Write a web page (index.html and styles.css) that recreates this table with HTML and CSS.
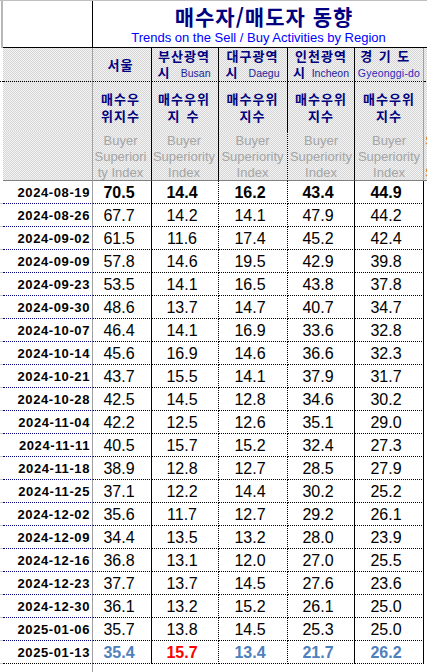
FILE: index.html
```html
<!DOCTYPE html>
<html lang="ko">
<head>
<meta charset="utf-8">
<title>매수자/매도자 동향</title>
<link rel="stylesheet" href="styles.css">
</head>
<body>
<div class="sheet">
  <!-- title row -->
  <div class="gut gut-title"></div>
  <div class="t-left"></div>
  <div class="t-title">
    <div class="ttl">매수자/매도자 동향</div>
    <div class="sub">Trends on the Sell / Buy Activities by Region</div>
  </div>
  <div class="t-x"></div>

  <!-- header row 1: regions -->
  <div class="gut gut-h1"></div>
  <div class="h h1 ca"></div>
  <div class="h h1 cs"><div class="kr">서울</div></div>
  <div class="h h1 cb"><div class="nm w53"><div class="kr">부산광역</div><div class="l2"><span class="kr">시</span><span class="en">Busan</span></div></div></div>
  <div class="h h1 cd"><div class="nm w54"><div class="kr">대구광역</div><div class="l2"><span class="kr">시</span><span class="en">Daegu</span></div></div></div>
  <div class="h h1 ci"><div class="nm w56"><div class="kr">인천광역</div><div class="l2"><span class="kr">시</span><span class="en">Incheon</span></div></div></div>
  <div class="h h1 cg"><div class="nm"><div class="kr wide">경기도</div><div class="en gy">Gyeonggi-do</div></div></div>
  <div class="h h1 cx"></div>

  <!-- header row 2: Korean index name -->
  <div class="gut"></div>
  <div class="h h2 ca"></div>
  <div class="h h2 cs"><div class="kr">매수우<br>위지수</div></div>
  <div class="h h2 cb"><div class="kr">매수우위<br><span class="sp7">지수</span></div></div>
  <div class="h h2 cd"><div class="kr">매수우위<br>지수</div></div>
  <div class="h h2 ci"><div class="kr">매수우위<br>지수</div></div>
  <div class="h h2 cg"><div class="kr">매수우위<br>지수</div></div>
  <div class="h h2 cx"></div>

  <!-- header row 3: English index name -->
  <div class="gut"></div>
  <div class="h h3 ca"></div>
  <div class="h h3 cs"><div class="eg">Buyer<br>Superiori<br>ty Index</div></div>
  <div class="h h3 cb"><div class="eg">Buyer<br>Superiority<br>Index</div></div>
  <div class="h h3 cd dotr"><div class="eg">Buyer<br>Superiority<br>Index</div></div>
  <div class="h h3 ci"><div class="eg">Buyer<br>Superiority<br>Index</div></div>
  <div class="h h3 cg"><div class="eg">Buyer<br>Superiority<br>Index</div></div>
  <div class="h h3 cx"><div class="or">Seller<br><br>Supply</div></div>

  <!-- data -->
  <div class="r first"><div></div><div>2024-08-19</div><div>70.5</div><div>14.4</div><div>16.2</div><div>43.4</div><div>44.9</div><div></div></div>
  <div class="r"><div></div><div>2024-08-26</div><div>67.7</div><div>14.2</div><div>14.1</div><div>47.9</div><div>44.2</div><div></div></div>
  <div class="r"><div></div><div>2024-09-02</div><div>61.5</div><div>11.6</div><div>17.4</div><div>45.2</div><div>42.4</div><div></div></div>
  <div class="r"><div></div><div>2024-09-09</div><div>57.8</div><div>14.6</div><div>19.5</div><div>42.9</div><div>39.8</div><div></div></div>
  <div class="r"><div></div><div>2024-09-23</div><div>53.5</div><div>14.1</div><div>16.5</div><div>43.8</div><div>37.8</div><div></div></div>
  <div class="r"><div></div><div>2024-09-30</div><div>48.6</div><div>13.7</div><div>14.7</div><div>40.7</div><div>34.7</div><div></div></div>
  <div class="r"><div></div><div>2024-10-07</div><div>46.4</div><div>14.1</div><div>16.9</div><div>33.6</div><div>32.8</div><div></div></div>
  <div class="r"><div></div><div>2024-10-14</div><div>45.6</div><div>16.9</div><div>14.6</div><div>36.6</div><div>32.3</div><div></div></div>
  <div class="r"><div></div><div>2024-10-21</div><div>43.7</div><div>15.5</div><div>14.1</div><div>37.9</div><div>31.7</div><div></div></div>
  <div class="r"><div></div><div>2024-10-28</div><div>42.5</div><div>14.5</div><div>12.8</div><div>34.6</div><div>30.2</div><div></div></div>
  <div class="r"><div></div><div>2024-11-04</div><div>42.2</div><div>12.5</div><div>12.6</div><div>35.1</div><div>29.0</div><div></div></div>
  <div class="r"><div></div><div>2024-11-11</div><div>40.5</div><div>15.7</div><div>15.2</div><div>32.4</div><div>27.3</div><div></div></div>
  <div class="r"><div></div><div>2024-11-18</div><div>38.9</div><div>12.8</div><div>12.7</div><div>28.5</div><div>27.9</div><div></div></div>
  <div class="r"><div></div><div>2024-11-25</div><div>37.1</div><div>12.2</div><div>14.4</div><div>30.2</div><div>25.2</div><div></div></div>
  <div class="r"><div></div><div>2024-12-02</div><div>35.6</div><div>11.7</div><div>12.7</div><div>29.2</div><div>26.1</div><div></div></div>
  <div class="r"><div></div><div>2024-12-09</div><div>34.4</div><div>13.5</div><div>13.2</div><div>28.0</div><div>23.9</div><div></div></div>
  <div class="r"><div></div><div>2024-12-16</div><div>36.8</div><div>13.1</div><div>12.0</div><div>27.0</div><div>25.5</div><div></div></div>
  <div class="r"><div></div><div>2024-12-23</div><div>37.7</div><div>13.7</div><div>14.5</div><div>27.6</div><div>23.6</div><div></div></div>
  <div class="r"><div></div><div>2024-12-30</div><div>36.1</div><div>13.2</div><div>15.2</div><div>26.1</div><div>25.0</div><div></div></div>
  <div class="r"><div></div><div>2025-01-06</div><div>35.7</div><div>13.8</div><div>14.5</div><div>25.3</div><div>25.0</div><div></div></div>
  <div class="r last"><div></div><div>2025-01-13</div><div>35.4</div><div class="red">15.7</div><div>13.4</div><div>21.7</div><div>26.2</div><div></div></div>

  <!-- filler below -->
  <div class="fill"><div></div><div></div><div></div><div></div><div></div><div></div><div></div><div></div></div>
</div>
</body>
</html>
```

FILE: styles.css
```css
html, body {
  margin: 0;
  padding: 0;
  background: #fff;
  overflow: hidden;
}

.sheet {
  display: grid;
  grid-template-columns: 3px 90px 59px 67px 69px 67px 69px 30px;
  grid-template-rows: 47px 34px 49px 50px repeat(21, 23px) 20px;
  border-top: 1px solid #c0c0c0;
  width: 454px;
  font-family: "Liberation Sans", Arial, sans-serif;
}

.sheet > div,
.r > div,
.fill > div {
  box-sizing: border-box;
}

/* gutter column */
.gut-title {
  border-right: 2px solid #b8b8b8;
}
.gut-h1 {
  border-bottom: 1px dotted #000;
}

/* title row */
.t-left {
  border-right: 1px solid #000;
  border-bottom: 1px solid #000;
}
.t-title {
  grid-column: 3 / 8;
  border-bottom: 1px solid #000;
  display: flex;
  flex-direction: column;
  align-items: center;
  padding-top: 3px;
}
.t-x {
  border-bottom: 1px solid #000;
}
.ttl {
  font: bold 21px/24px "Noto Sans CJK KR", sans-serif;
  color: #000080;
  letter-spacing: 1px;
  padding-left: 11px;
}
.sub {
  font: 13px/15px "Liberation Sans", Arial, sans-serif;
  color: #0000ff;
  margin-top: 2px;
}

/* header block */
.h {
  background: repeating-conic-gradient(#d6d6d6 0% 25%, #f3f3f3 0% 50%) 0 0 / 2px 2px;
  display: flex;
  align-items: center;
  justify-content: center;
}
.h1 {
  border-bottom: 1px dotted #000;
}
.h3 {
  border-bottom: 1px solid #808080;
  align-items: flex-start;
}
.h.ca { border-right: 1px solid #a0a0a0; }
.h.cs { border-right: 1px solid #000; padding-right: 3px; }
.h.cb { border-right: 1px solid #000; padding-right: 2px; }
.h.cd { border-right: 1px solid #000; padding-right: 1px; }
.h.cd.dotr { border-right: 1px dotted #000; }
.h.ci { border-right: 1px solid #000; }
.h.cg { border-right: 1px solid #a0a0a0; }
.h.cx { justify-content: flex-start; }

.kr {
  font: bold 13px/17px "Noto Sans CJK KR", sans-serif;
  color: #000080;
  letter-spacing: 1px;
  text-align: center;
}
.kr.wide { letter-spacing: 6.5px; padding-right: 2px; }
.sp7 { letter-spacing: 7px; padding-left: 5px; }

.nm {
  display: flex;
  flex-direction: column;
  align-items: center;
}
.nm.w53 { width: 53px; }
.nm.w54 { width: 54px; }
.nm.w56 { width: 56px; }
.nm .kr { line-height: 16.5px; }
.l2 {
  align-self: stretch;
  display: flex;
  justify-content: space-between;
  align-items: baseline;
}
.en {
  font: 10.5px/16.5px "Liberation Sans", Arial, sans-serif;
  color: #1c1c9a;
}
.en.gy {
  color: #2a2ab8;
  letter-spacing: 0.2px;
}

.eg {
  font: 13px/16px "Liberation Sans", Arial, sans-serif;
  color: #a5a5a5;
  text-align: center;
  padding-top: 2px;
  white-space: nowrap;
}
.or {
  font: 13px/16px "Liberation Sans", Arial, sans-serif;
  color: #e2843c;
  padding-top: 2px;
  padding-left: 1px;
  white-space: nowrap;
}

/* data rows */
.r, .fill {
  display: contents;
}
.r > div {
  font-size: 16px;
  color: #000;
  display: flex;
  align-items: center;
  justify-content: center;
  padding: 1px 6px 0 0;
  border-bottom: 1px dotted #000;
}
.r > div:nth-child(1) {
  padding: 0;
  border-bottom: 1px solid #c8c8c8;
}
.r > div:nth-child(2) {
  font-size: 13px;
  font-weight: bold;
  letter-spacing: 0.6px;
  justify-content: flex-end;
  padding: 0 2px 0 0;
  border-right: 1px solid #a0a0a0;
  border-bottom: 1px dotted #000080;
}
.r > div:nth-child(3) { border-right: 1px solid #000; }
.r > div:nth-child(4),
.r > div:nth-child(5) { border-right: 1px dotted #000; }
.r > div:nth-child(6),
.r > div:nth-child(7) { border-right: 1px solid #000; }
.r > div:nth-child(8) { border-bottom: none; }

.r.first > div { font-weight: bold; }
.r.last > div { font-weight: bold; color: #4f81bd; }
.r.last > div:nth-child(2) { color: #000; border-bottom-color: #000; }
.r.last > div.red { color: #ff0000; }

.fill > div:nth-child(2) { border-right: 1px solid #a0a0a0; }
```
